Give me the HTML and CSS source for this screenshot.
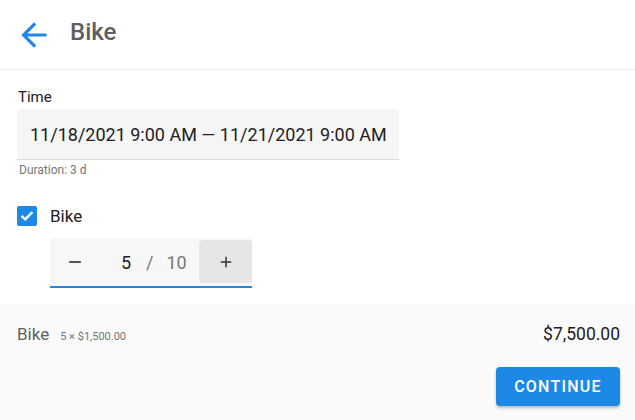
FILE: index.html
```html
<!DOCTYPE html>
<html>
<head>
<meta charset="utf-8">
<link rel="stylesheet" href="styles.css">
</head>
<body>
<header class="topbar">
  <svg class="back" viewBox="0 0 24 24" width="38" height="38"><path fill="#1e88e5" d="M20 11H7.83l5.59-5.59L12 4l-8 8 8 8 1.41-1.41L7.83 13H20v-2z"/></svg>
  <h1 class="title">Bike</h1>
</header>
<main class="content">
  <div class="label">Time</div>
  <div class="field">11/18/2021 9:00 AM — 11/21/2021 9:00 AM</div>
  <div class="hint">Duration: 3 d</div>
  <div class="check-row">
    <span class="checkbox"><svg viewBox="0 0 20 20" width="20" height="20"><polyline points="4.6,9.9 8.2,13.3 15.4,6.2" fill="none" stroke="#fff" stroke-width="2.4"/></svg></span>
    <span class="check-label">Bike</span>
  </div>
  <div class="stepper">
    <span class="step-btn minus"><svg viewBox="0 0 24 24" width="20" height="20"><path fill="#333" d="M19 13H5v-2h14v2z"/></svg></span>
    <span class="value">5</span>
    <span class="slash">/</span>
    <span class="max">10</span>
    <span class="fill"></span>
    <span class="step-btn plus"><svg viewBox="0 0 24 24" width="18" height="18"><path fill="#333" d="M19 13h-6v6h-2v-6H5v-2h6V5h2v6h6v2z"/></svg></span>
  </div>
</main>
<footer class="summary">
  <div class="sum-row">
    <span class="item">Bike</span>
    <span class="item-detail">5 × $1,500.00</span>
    <span class="total">$7,500.00</span>
  </div>
  <div class="actions">
    <button class="continue">CONTINUE</button>
  </div>
</footer>
</body>
</html>
```
FILE: styles.css
```css
html, body {
  margin: 0;
  padding: 0;
  background: #fff;
  font-family: Roboto, "Liberation Sans", sans-serif;
  color: #212121;
}
.topbar {
  height: 69px;
  border-bottom: 1px solid #eeeeee;
  display: flex;
  align-items: center;
  padding-left: 15px;
}
.back {
  display: block;
  flex: none;
}
.title {
  margin: 0 0 6px 17px;
  font-size: 24px;
  line-height: 28px;
  font-weight: 500;
  color: #5f5f5f;
}
.content {
  padding: 17px 17px 0 17px;
}
.label {
  font-size: 15px;
  line-height: 21px;
  margin-bottom: 1px;
  padding-left: 1px;
}
.field {
  width: 382px;
  height: 51px;
  box-sizing: border-box;
  background: #f5f5f5;
  border-radius: 4px 4px 0 0;
  border-bottom: 1px solid #dcdcdc;
  display: flex;
  align-items: center;
  padding-left: 13px;
  font-size: 18px;
  color: #212121;
}
.hint {
  margin-top: 2px;
  font-size: 12px;
  line-height: 16px;
  color: #757575;
  padding-left: 2px;
}
.check-row {
  margin-top: 28px;
  display: flex;
  align-items: center;
  height: 20px;
}
.checkbox {
  width: 20px;
  height: 20px;
  background: #1e88e5;
  border-radius: 2px;
  display: flex;
  align-items: center;
  justify-content: center;
}
.checkbox svg { display: block; }
.check-label {
  margin-left: 13px;
  font-size: 17px;
}
.stepper {
  margin: 12px 0 0 33px;
  width: 202px;
  height: 50px;
  box-sizing: border-box;
  background: #f7f7f7;
  border-radius: 4px 4px 0 0;
  border-bottom: 2px solid #1e88e5;
  display: flex;
  align-items: center;
  font-size: 18px;
}
.step-btn {
  display: flex;
  align-items: center;
  justify-content: center;
}
.minus {
  width: 50px;
  height: 100%;
}
.value {
  width: 31px;
  text-align: right;
  color: #212121;
}
.slash {
  margin-left: 15px;
  color: #777;
}
.max {
  margin-left: 13px;
  color: #777;
}
.fill { flex: 1; }
.plus {
  width: 53px;
  height: 43px;
  margin-top: -1px;
  background: #e6e6e6;
  border-radius: 4px;
}
.summary {
  margin-top: 17px;
  background: #fafafa;
  padding: 17px 15px 17px 17px;
}
.sum-row {
  display: flex;
  align-items: baseline;
  line-height: 24px;
}
.item {
  font-size: 17px;
  color: #5f5f5f;
}
.item-detail {
  margin-left: 11px;
  font-size: 11px;
  color: #757575;
}
.total {
  margin-left: auto;
  font-size: 17.5px;
  color: #212121;
}
.actions {
  margin-top: 18px;
  display: flex;
  justify-content: flex-end;
}
.continue {
  width: 124px;
  height: 39px;
  border: none;
  border-radius: 4px;
  background: #1e88e5;
  color: #fff;
  font-family: Roboto, "Liberation Sans", sans-serif;
  font-size: 16px;
  font-weight: 500;
  letter-spacing: 1.25px;
  box-shadow: 0 2px 3px rgba(0,0,0,0.25);
  padding: 0;
}
```
